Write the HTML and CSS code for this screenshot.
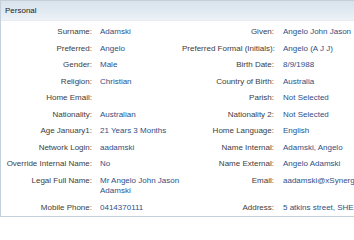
FILE: index.html
```html
<!DOCTYPE html>
<html>
<head>
<meta charset="utf-8">
<link rel="stylesheet" href="styles.css">
</head>
<body>
<div class="panel">
  <div class="panel-header">Personal</div>
  <div class="panel-body">
    <div class="grid">
      <div class="lbl">Surname:</div><div class="val">Adamski</div>
      <div class="lbl lbl-r">Given:</div><div class="val val-r">Angelo John Jason</div>

      <div class="lbl">Preferred:</div><div class="val">Angelo</div>
      <div class="lbl lbl-r">Preferred Formal (Initials):</div><div class="val val-r">Angelo (A J J)</div>

      <div class="lbl">Gender:</div><div class="val">Male</div>
      <div class="lbl lbl-r">Birth Date:</div><div class="val val-r">8/9/1988</div>

      <div class="lbl">Religion:</div><div class="val">Christian</div>
      <div class="lbl lbl-r">Country of Birth:</div><div class="val val-r">Australia</div>

      <div class="lbl">Home Email:</div><div class="val"></div>
      <div class="lbl lbl-r">Parish:</div><div class="val val-r">Not Selected</div>

      <div class="lbl">Nationality:</div><div class="val">Australian</div>
      <div class="lbl lbl-r">Nationality 2:</div><div class="val val-r">Not Selected</div>

      <div class="lbl">Age January1:</div><div class="val">21 Years 3 Months</div>
      <div class="lbl lbl-r">Home Language:</div><div class="val val-r">English</div>

      <div class="lbl">Network Login:</div><div class="val">aadamski</div>
      <div class="lbl lbl-r">Name Internal:</div><div class="val val-r">Adamski, Angelo</div>

      <div class="lbl">Override Internal Name:</div><div class="val">No</div>
      <div class="lbl lbl-r">Name External:</div><div class="val val-r">Angelo Adamski</div>

      <div class="lbl">Legal Full Name:</div><div class="val">Mr Angelo John Jason Adamski</div>
      <div class="lbl lbl-r">Email:</div><div class="val val-r">aadamski@xSynergy.com.au</div>

      <div class="lbl">Mobile Phone:</div><div class="val">0414370111</div>
      <div class="lbl lbl-r">Address:</div><div class="val val-r">5 atkins street, SHERWOOD</div>
    </div>
  </div>
</div>
</body>
</html>
```

FILE: styles.css
```css
html, body {
  margin: 0;
  padding: 0;
  background: #ffffff;
  overflow: hidden;
}

body {
  font-family: "Liberation Sans", Arial, sans-serif;
  font-size: 8px;
}

.panel {
  width: 420px;
  border: 1px solid #c3cfda;
  border-right: none;
  background: #ffffff;
}

.panel-header {
  height: 19px;
  line-height: 19px;
  padding-left: 4px;
  color: #222222;
  font-size: 8px;
  background: linear-gradient(to bottom, #d8e3ec 0%, #e3ebf2 60%, #edf2f6 100%);
  border-bottom: 1px solid #e6ecf1;
}

.panel-body {
  padding-top: 3px;
}

.grid {
  display: grid;
  grid-template-columns: 99px 82px 101px 1fr;
}

.lbl,
.val {
  line-height: 10.5px;
  padding: 3px 0;
}

.lbl {
  text-align: right;
  color: #3d3d3d;
  padding-right: 8px;
  white-space: nowrap;
}

.lbl-r {
  padding-right: 9px;
}

.val {
  color: #2f4f86;
}

.val-r {
  white-space: nowrap;
}
```
